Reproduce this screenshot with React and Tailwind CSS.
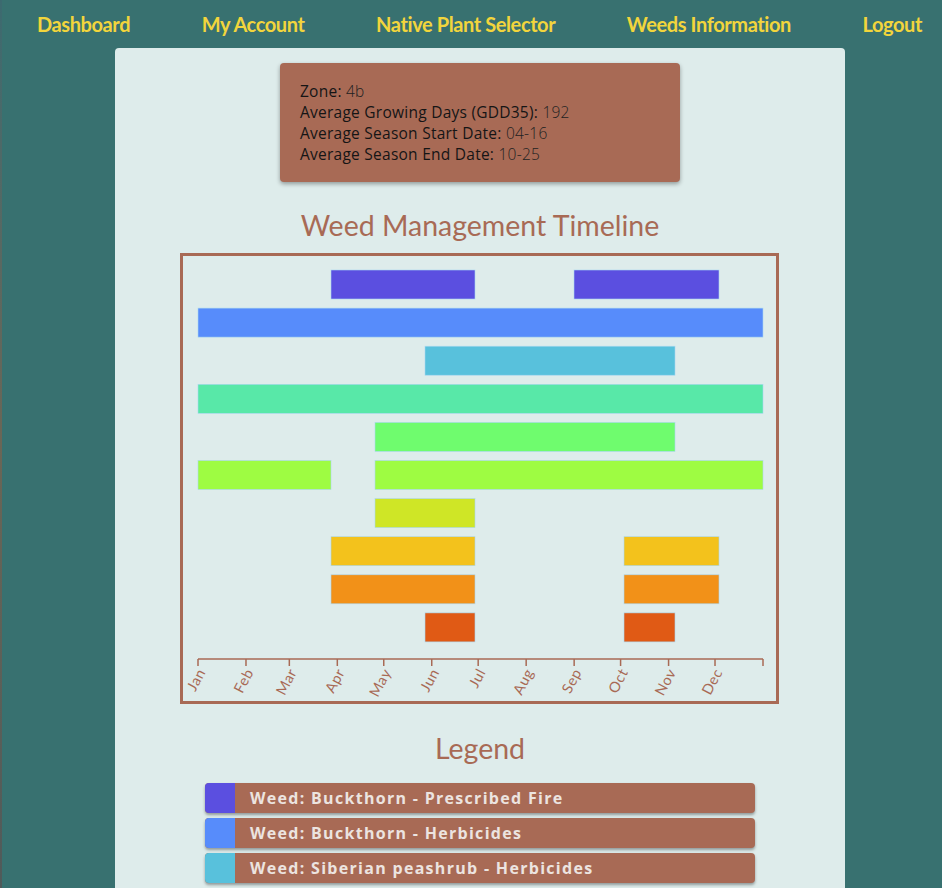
import React from "react";

const Y0 = 257;
const px = (x) => x - 183;
const py = (y) => y - Y0;

const rows = [
  { color: "#5b4fe0", segs: [[331, 475], [574, 719]] },
  { color: "#578cfb", segs: [[198, 763]] },
  { color: "#58c1dc", segs: [[425, 675]] },
  { color: "#58e8a8", segs: [[198, 763]] },
  { color: "#6ffc6e", segs: [[375, 675]] },
  { color: "#9efc42", segs: [[198, 331], [375, 763]] },
  { color: "#cfe626", segs: [[375, 475]] },
  { color: "#f3c21c", segs: [[331, 475], [624, 719]] },
  { color: "#f29118", segs: [[331, 475], [624, 719]] },
  { color: "#e05a15", segs: [[425, 475], [624, 675]] },
];

const months = ["Jan", "Feb", "Mar", "Apr", "May", "Jun", "Jul", "Aug", "Sep", "Oct", "Nov", "Dec"];
const days = [0, 31, 59, 90, 120, 151, 181, 212, 243, 273, 304, 334, 365];
const dx = (d) => 198 + (d * 565) / 365;

const legend = [
  { color: "#5b4fe0", text: "Weed: Buckthorn - Prescribed Fire" },
  { color: "#578cfb", text: "Weed: Buckthorn - Herbicides" },
  { color: "#58c1dc", text: "Weed: Siberian peashrub - Herbicides" },
];

export default function App() {
  return (
    <div className="relative min-h-[888px] bg-[#387170] font-['Lato',_'Open_Sans',_sans-serif]">
      <div className="absolute left-0 top-0 h-full w-[2px] bg-gradient-to-b from-[#3c6a70] via-[#6a6656] to-[#4f5a5a]" />
      <nav className="flex items-center justify-between pl-[37px] pr-[20px] h-[48px]">
        {["Dashboard", "My Account", "Native Plant Selector", "Weeds Information", "Logout"].map((t) => (
          <span key={t} className="text-[20px] font-bold text-[#f2d53c] tracking-[-0.4px]">
            {t}
          </span>
        ))}
      </nav>
      <main className="ml-[115px] w-[730px] min-h-[840px] rounded-t-[4px] bg-[#deeceb] pt-[15px] flex flex-col items-center">
        <div className="w-[400px] h-[119px] rounded-[4px] bg-[#a86a55] shadow-[0_2px_4px_rgba(0,0,0,0.35)] px-[20px] pt-[18px] text-[15.5px] tracking-[0.25px] leading-[21px] text-[#151515] font-['Open_Sans',_sans-serif]">
          <div><span className="font-medium">Zone:</span> <span className="font-light text-[#222]">4b</span></div>
          <div><span className="font-medium">Average Growing Days (GDD35):</span> <span className="font-light text-[#222]">192</span></div>
          <div><span className="font-medium">Average Season Start Date:</span> <span className="font-light text-[#222]">04-16</span></div>
          <div><span className="font-medium">Average Season End Date:</span> <span className="font-light text-[#222]">10-25</span></div>
        </div>
        <h1 className="mt-[25px] text-[28.5px] leading-[36px] text-[#a86a55]">Weed Management Timeline</h1>
        <div className="mt-[10px] ml-[-1px] w-[599px] h-[451px] border-[3px] border-[#a86a55]">
          <svg width="593" height="445" className="block overflow-visible">
            {rows.map((r, i) =>
              r.segs.map(([a, b], j) => (
                <rect
                  key={i + "-" + j}
                  x={px(a)}
                  y={py(271 + i * 38.1)}
                  width={b - a}
                  height={29}
                  fill={r.color}
                  stroke="#a9d8f0"
                  strokeWidth="0.6"
                />
              ))
            )}
            <line x1={px(198)} x2={px(763)} y1={py(660)} y2={py(660)} stroke="#a86a55" strokeWidth="1.5" />
            {days.map((d, i) => (
              <line key={i} x1={px(dx(d))} x2={px(dx(d))} y1={py(660)} y2={py(667)} stroke="#a86a55" strokeWidth="1.5" />
            ))}
            {months.map((m, i) => (
              <text
                key={m}
                transform={`translate(${px(dx(days[i])) + 8}, ${py(673)}) rotate(-62)`}
                textAnchor="end"
                fontSize="14.5"
                letterSpacing="0.6"
                fill="#a86a55"
                fontFamily="Lato, sans-serif"
              >
                {m}
              </text>
            ))}
          </svg>
        </div>
        <h2 className="mt-[26px] text-[28.5px] leading-[36px] text-[#a86a55]">Legend</h2>
        <div className="mt-[17px] flex flex-col gap-[5px] w-[550px]">
          {legend.map((l) => (
            <div key={l.text} className="flex h-[30px] rounded-[4px] overflow-hidden bg-[#a86a55] shadow-[0_2px_3px_rgba(0,0,0,0.35)]">
              <div className="w-[30px] h-full" style={{ background: l.color }} />
              <div className="pl-[15px] flex items-center text-[16px] font-bold tracking-[1.3px] text-[#ece4e0] font-['Open_Sans',_sans-serif]">
                {l.text}
              </div>
            </div>
          ))}
        </div>
      </main>
    </div>
  );
}
